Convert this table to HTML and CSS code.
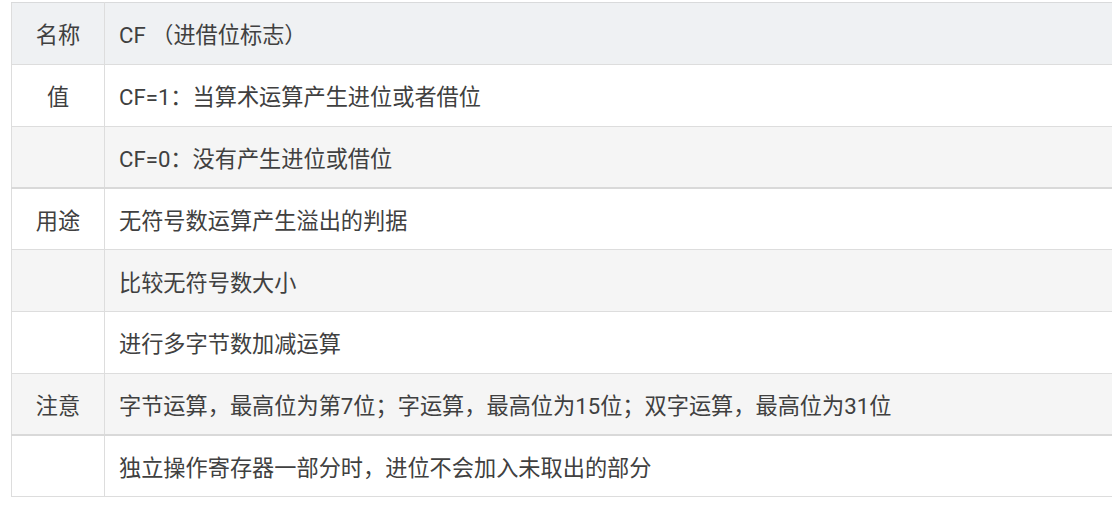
FILE: index.html
```html
<!DOCTYPE html>
<html lang="zh">
<head>
<meta charset="utf-8">
<title>CF 进借位标志</title>
<link rel="stylesheet" href="styles.css">
</head>
<body>
<div class="page">
  <table class="flag-table">
    <colgroup>
      <col class="col-label">
      <col class="col-value">
    </colgroup>
    <thead>
      <tr class="head-row">
        <th class="label">名称</th>
        <th class="value">CF （进借位标志）</th>
      </tr>
    </thead>
    <tbody>
      <tr class="row">
        <td class="label">值</td>
        <td class="value">CF=1：当算术运算产生进位或者借位</td>
      </tr>
      <tr class="row alt">
        <td class="label"></td>
        <td class="value">CF=0：没有产生进位或借位</td>
      </tr>
      <tr class="row thick">
        <td class="label">用途</td>
        <td class="value">无符号数运算产生溢出的判据</td>
      </tr>
      <tr class="row alt">
        <td class="label"></td>
        <td class="value">比较无符号数大小</td>
      </tr>
      <tr class="row">
        <td class="label"></td>
        <td class="value">进行多字节数加减运算</td>
      </tr>
      <tr class="row alt">
        <td class="label">注意</td>
        <td class="value">字节运算，最高位为第7位；字运算，最高位为15位；双字运算，最高位为31位</td>
      </tr>
      <tr class="row thick">
        <td class="label"></td>
        <td class="value">独立操作寄存器一部分时，进位不会加入未取出的部分</td>
      </tr>
    </tbody>
  </table>
</div>
</body>
</html>
```

FILE: styles.css
```css
html, body {
  margin: 0;
  padding: 0;
  background: #ffffff;
  overflow: hidden;
}

.page {
  padding: 2px 0 0 11px;
}

.flag-table {
  width: 1120px;
  border-collapse: collapse;
  table-layout: fixed;
  font-family: "Roboto", "Noto Sans CJK SC", sans-serif;
  font-size: 22.2px;
  color: #404040;
}

.col-label {
  width: 93px;
}

.flag-table th,
.flag-table td {
  height: 61.8px;
  padding: 0 14px;
  border: 1px solid #dddddd;
  font-weight: normal;
  text-align: left;
  vertical-align: middle;
  white-space: nowrap;
  box-sizing: border-box;
}

.flag-table .label {
  text-align: center;
  padding: 0;
}

.head-row {
  background: #eff1f3;
}

.head-row th {
  border-top-color: #d9dadb;
}

.row {
  background: #ffffff;
}

.row.alt {
  background: #f5f5f5;
}

.row.thick td {
  border-top: 2px solid #d9d9d9;
}
```
